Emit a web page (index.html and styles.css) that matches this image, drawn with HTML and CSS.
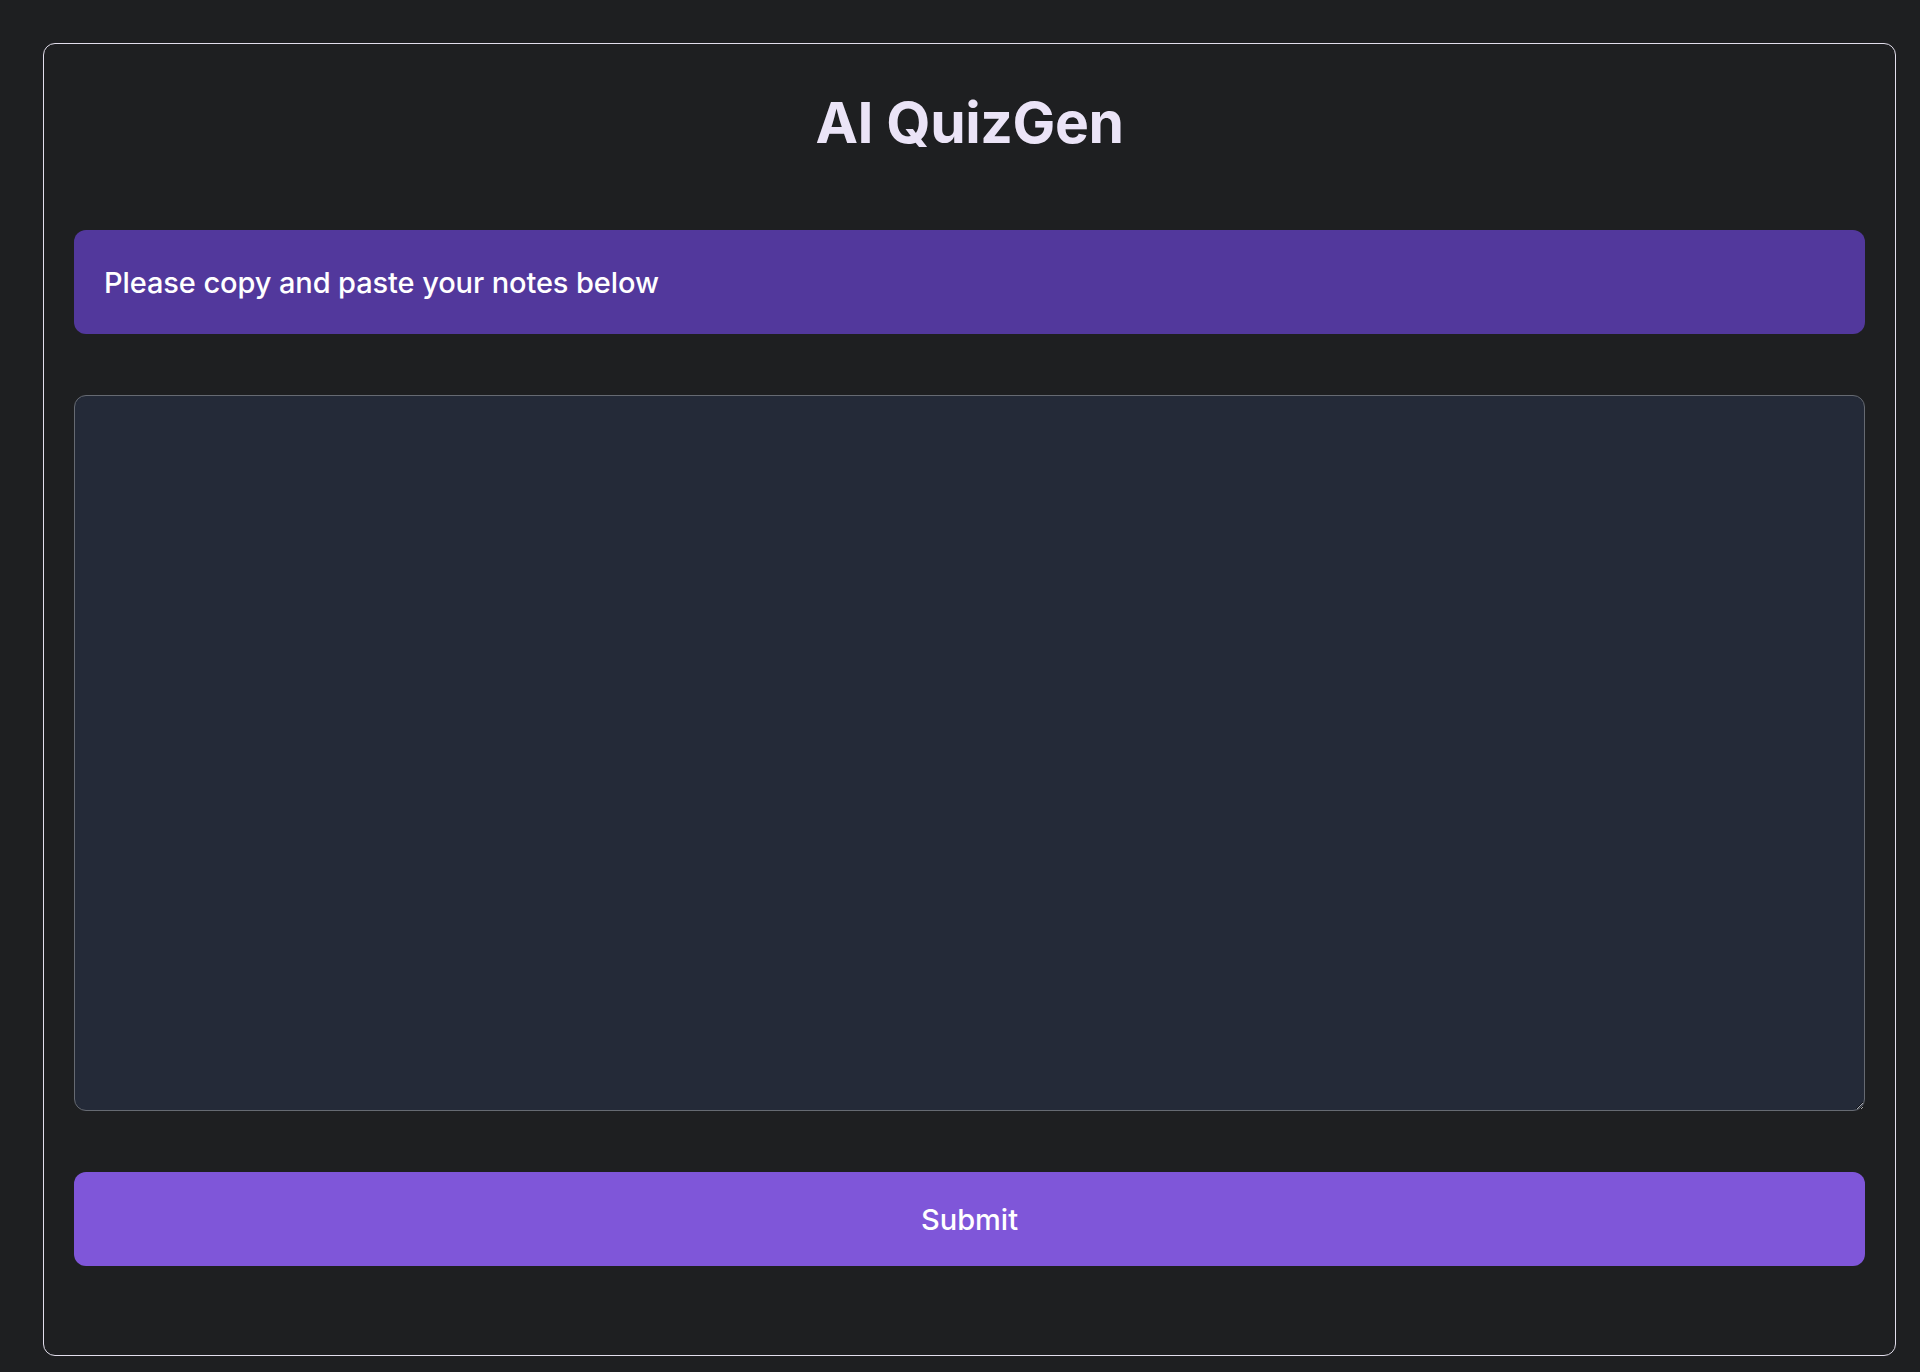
FILE: index.html
```html
<!DOCTYPE html>
<html lang="en">
<head>
<meta charset="utf-8">
<title>AI QuizGen</title>
<link rel="stylesheet" href="styles.css">
</head>
<body>
<main class="card">
  <h1 class="title">AI QuizGen</h1>
  <div class="banner">Please copy and paste your notes below</div>
  <textarea class="notes" aria-label="Notes"></textarea>
  <button class="submit" type="button">Submit</button>
</main>
</body>
</html>
```

FILE: styles.css
```css
html, body {
  margin: 0;
  padding: 0;
  background: #1e1f21;
}
body {
  font-family: Inter, "Noto Sans", "Liberation Sans", sans-serif;
  padding: 43px 24px 16px 43px;
  height: 1372px;
  box-sizing: border-box;
}
.card {
  box-sizing: border-box;
  width: 1853px;
  height: 1313px;
  border: 1px solid #e2deec;
  border-radius: 12px;
  padding: 44px 30px 0 30px;
  display: flex;
  flex-direction: column;
}
.title {
  margin: 0;
  text-align: center;
  font-size: 57px;
  font-weight: 700;
  line-height: 69px;
  color: #ebe4f7;
  letter-spacing: -0.4px;
}
.banner {
  margin-top: 73px;
  height: 104px;
  box-sizing: border-box;
  background: #52389c;
  border-radius: 12px;
  display: flex;
  align-items: center;
  padding: 0 30px;
  color: #ffffff;
  font-size: 29px;
  font-weight: 500;
  letter-spacing: -0.1px;
}
.notes {
  margin-top: 61px;
  height: 716px;
  box-sizing: border-box;
  background: #242a38;
  border: 1px solid #666a72;
  border-radius: 12px;
  color: #ffffff;
  font-family: inherit;
  font-size: 20px;
  padding: 12px;
  outline: none;
}
.submit {
  margin-top: 61px;
  height: 94px;
  border: none;
  border-radius: 12px;
  background: #7f56d9;
  color: #ffffff;
  font-family: inherit;
  font-size: 29px;
  font-weight: 500;
  cursor: pointer;
}
```
